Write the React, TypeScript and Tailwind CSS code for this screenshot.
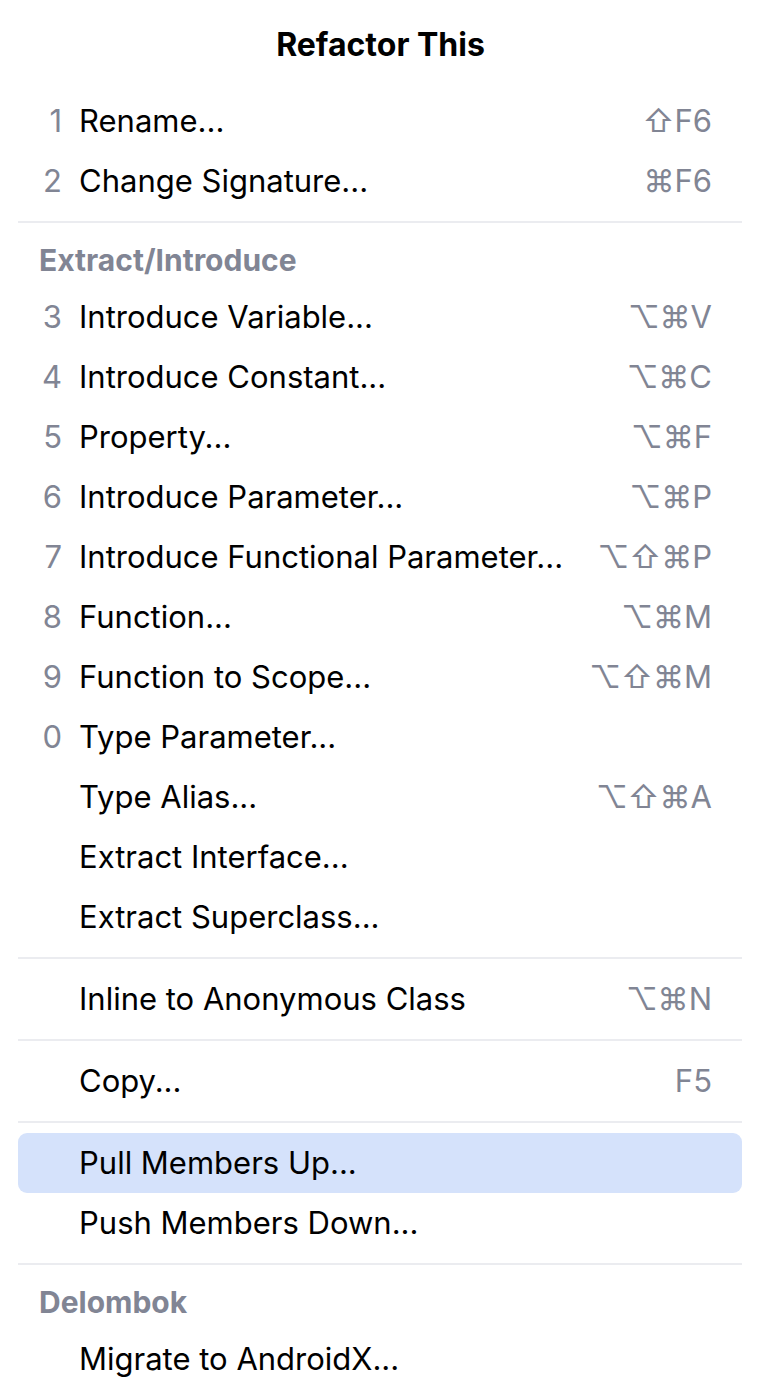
import React from 'react';

type Row =
  | { kind: 'item'; num?: string; label: string; shortcut?: string; active?: boolean }
  | { kind: 'sep' }
  | { kind: 'header'; label: string };

const rows: Row[] = [
  { kind: 'item', num: '1', label: 'Rename...', shortcut: '⇧F6' },
  { kind: 'item', num: '2', label: 'Change Signature...', shortcut: '⌘F6' },
  { kind: 'sep' },
  { kind: 'header', label: 'Extract/Introduce' },
  { kind: 'item', num: '3', label: 'Introduce Variable...', shortcut: '⌥⌘V' },
  { kind: 'item', num: '4', label: 'Introduce Constant...', shortcut: '⌥⌘C' },
  { kind: 'item', num: '5', label: 'Property...', shortcut: '⌥⌘F' },
  { kind: 'item', num: '6', label: 'Introduce Parameter...', shortcut: '⌥⌘P' },
  { kind: 'item', num: '7', label: 'Introduce Functional Parameter...', shortcut: '⌥⇧⌘P' },
  { kind: 'item', num: '8', label: 'Function...', shortcut: '⌥⌘M' },
  { kind: 'item', num: '9', label: 'Function to Scope...', shortcut: '⌥⇧⌘M' },
  { kind: 'item', num: '0', label: 'Type Parameter...' },
  { kind: 'item', label: 'Type Alias...', shortcut: '⌥⇧⌘A' },
  { kind: 'item', label: 'Extract Interface...' },
  { kind: 'item', label: 'Extract Superclass...' },
  { kind: 'sep' },
  { kind: 'item', label: 'Inline to Anonymous Class', shortcut: '⌥⌘N' },
  { kind: 'sep' },
  { kind: 'item', label: 'Copy...', shortcut: 'F5' },
  { kind: 'sep' },
  { kind: 'item', label: 'Pull Members Up...', active: true },
  { kind: 'item', label: 'Push Members Down...' },
  { kind: 'sep' },
  { kind: 'header', label: 'Delombok' },
  { kind: 'item', label: 'Migrate to AndroidX...' },
];

export default function App() {
  return (
    <div
      className="w-[770px] h-[1400px] bg-white overflow-hidden"
      style={{ fontFamily: 'Inter, "DejaVu Sans", sans-serif' }}
    >
      {/* Title */}
      <div className="h-[91px] flex items-center justify-center pb-px pr-[9px]">
        <span className="text-[32px] font-bold text-black">Refactor This</span>
      </div>

      <div className="pl-[18px] pr-[28px]">
        {rows.map((row, i) => {
          if (row.kind === 'sep') {
            return (
              <div key={i} className="py-[10px]">
                <div className="h-[2px] bg-[#ebecf0]" />
              </div>
            );
          }
          if (row.kind === 'header') {
            return (
              <div key={i} className="h-[54px] pt-[11px] pl-[21px]">
                <span className="block text-[30px] leading-[32px] font-bold text-[#818594]">{row.label}</span>
              </div>
            );
          }
          return (
            <div
              key={i}
              className={`h-[60px] flex items-center rounded-[9px] ${row.active ? 'bg-[#d5e2fb]' : ''}`}
            >
              <span className="w-[44px] text-right text-[31px] text-[#818594]">{row.num}</span>
              <span className="ml-[17px] flex-1 text-[31px] text-black">{row.label}</span>
              {row.shortcut && (
                <span className="pr-[30px] text-[31px] text-[#818594]">{row.shortcut}</span>
              )}
            </div>
          );
        })}
      </div>
    </div>
  );
}
